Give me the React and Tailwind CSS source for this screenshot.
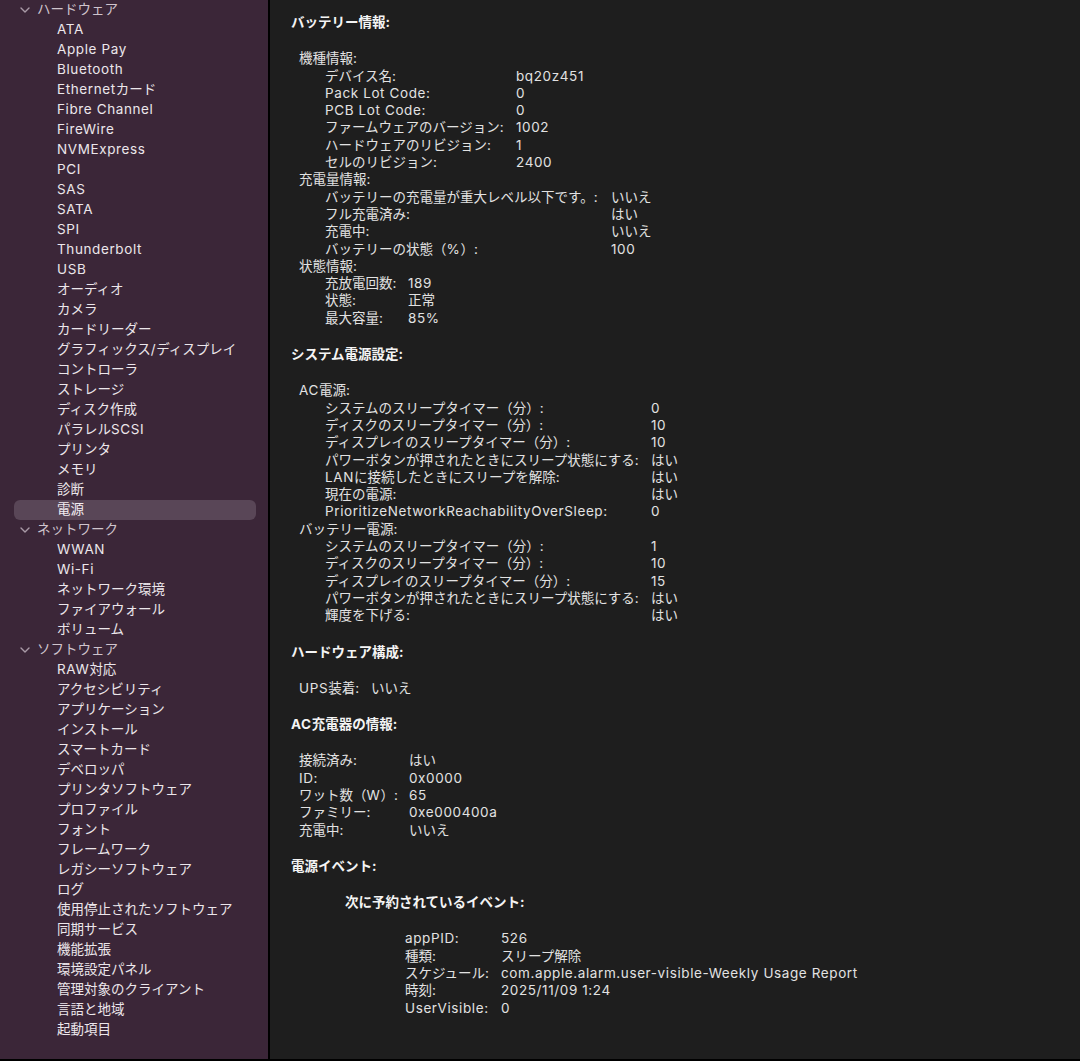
import React from 'react';

const sidebar = [
  { type: 'group', label: 'ハードウェア' },
  'ATA', 'Apple Pay', 'Bluetooth', 'Ethernetカード', 'Fibre Channel', 'FireWire', 'NVMExpress', 'PCI', 'SAS', 'SATA', 'SPI', 'Thunderbolt', 'USB',
  'オーディオ', 'カメラ', 'カードリーダー', 'グラフィックス/ディスプレイ', 'コントローラ', 'ストレージ', 'ディスク作成', 'パラレルSCSI', 'プリンタ', 'メモリ', '診断',
  { type: 'selected', label: '電源' },
  { type: 'group', label: 'ネットワーク' },
  'WWAN', 'Wi-Fi', 'ネットワーク環境', 'ファイアウォール', 'ボリューム',
  { type: 'group', label: 'ソフトウェア' },
  'RAW対応', 'アクセシビリティ', 'アプリケーション', 'インストール', 'スマートカード', 'デベロッパ', 'プリンタソフトウェア', 'プロファイル', 'フォント', 'フレームワーク',
  'レガシーソフトウェア', 'ログ', '使用停止されたソフトウェア', '同期サービス', '機能拡張', '環境設定パネル', '管理対象のクライアント', '言語と地域', '起動項目',
];

// latin runs get a little extra tracking so they read closer to the system font
function T({ s }) {
  return s.split(/([\x00-\x7f]+)/).map((part, i) =>
    /^[\x00-\x7f]+$/.test(part)
      ? <span key={i} className="tracking-[0.045em]">{part}</span>
      : part
  );
}

function Chevron() {
  return (
    <svg width="12" height="12" viewBox="0 0 12 12" className="shrink-0">
      <path d="M2 4 L6 8 L10 4" fill="none" stroke="#a99aa7" strokeWidth="1.4" strokeLinecap="round" strokeLinejoin="round" />
    </svg>
  );
}

function Sidebar() {
  return (
    <div className="w-[270px] shrink-0 bg-[#3b2638] border-r-2 border-black overflow-hidden">
      {sidebar.map((item, i) => {
        if (typeof item === 'string') {
          return (
            <div key={i} className="h-[20px] flex items-center pl-[57px] text-[#ece6eb] whitespace-nowrap">
              <T s={item} />
            </div>
          );
        }
        if (item.type === 'group') {
          return (
            <div key={i} className="h-[20px] flex items-center pl-[19px] gap-[6px] text-[#cfc4cd] whitespace-nowrap">
              <Chevron />
              <span>{item.label}</span>
            </div>
          );
        }
        return (
          <div key={i} className="h-[20px] ml-[14px] w-[242px] rounded-md bg-[#594657] flex items-center pl-[43px] text-[#f2edf1]">
            {item.label}
          </div>
        );
      })}
    </div>
  );
}

function Rows({ w, rows }) {
  return (
    <div>
      {rows.map(([k, v], i) => (
        <div key={i} className="flex whitespace-nowrap">
          <div style={{ width: w }} className="shrink-0"><T s={k} /></div>
          <div><T s={v} /></div>
        </div>
      ))}
    </div>
  );
}

function Heading({ children, className = '' }) {
  return <div className={`font-bold text-[#f4f4f4] ${className}`}><T s={children} /></div>;
}

function Label({ children }) {
  return <div><T s={children} /></div>;
}

export default function App() {
  return (
    <div
      className="flex h-[1061px] w-[1080px] border-b-2 border-black text-[13.5px] leading-[17.3px] overflow-hidden"
      style={{ fontFamily: 'Inter, "Noto Sans CJK JP", sans-serif' }}
    >
      <Sidebar />
      <div className="flex-1 bg-[#1e1e1e] text-[#e2e2e2] pl-[21px] pt-[14px]">
        <Heading>バッテリー情報:</Heading>
        <div className="mt-[19px] pl-[8px]">
          <Label>機種情報:</Label>
          <div className="pl-[26px]">
            <Rows w={191} rows={[
              ['デバイス名:', 'bq20z451'],
              ['Pack Lot Code:', '0'],
              ['PCB Lot Code:', '0'],
              ['ファームウェアのバージョン:', '1002'],
              ['ハードウェアのリビジョン:', '1'],
              ['セルのリビジョン:', '2400'],
            ]} />
          </div>
          <Label>充電量情報:</Label>
          <div className="pl-[26px]">
            <Rows w={286} rows={[
              ['バッテリーの充電量が重大レベル以下です。:', 'いいえ'],
              ['フル充電済み:', 'はい'],
              ['充電中:', 'いいえ'],
              ['バッテリーの状態（%）:', '100'],
            ]} />
          </div>
          <Label>状態情報:</Label>
          <div className="pl-[26px]">
            <Rows w={83} rows={[
              ['充放電回数:', '189'],
              ['状態:', '正常'],
              ['最大容量:', '85%'],
            ]} />
          </div>
        </div>

        <Heading className="mt-[19px]">システム電源設定:</Heading>
        <div className="mt-[19px] pl-[8px]">
          <Label>AC電源:</Label>
          <div className="pl-[26px]">
            <Rows w={326} rows={[
              ['システムのスリープタイマー（分）:', '0'],
              ['ディスクのスリープタイマー（分）:', '10'],
              ['ディスプレイのスリープタイマー（分）:', '10'],
              ['パワーボタンが押されたときにスリープ状態にする:', 'はい'],
              ['LANに接続したときにスリープを解除:', 'はい'],
              ['現在の電源:', 'はい'],
              ['PrioritizeNetworkReachabilityOverSleep:', '0'],
            ]} />
          </div>
          <Label>バッテリー電源:</Label>
          <div className="pl-[26px]">
            <Rows w={326} rows={[
              ['システムのスリープタイマー（分）:', '1'],
              ['ディスクのスリープタイマー（分）:', '10'],
              ['ディスプレイのスリープタイマー（分）:', '15'],
              ['パワーボタンが押されたときにスリープ状態にする:', 'はい'],
              ['輝度を下げる:', 'はい'],
            ]} />
          </div>
        </div>

        <Heading className="mt-[19px]">ハードウェア構成:</Heading>
        <div className="mt-[19px] pl-[8px]">
          <Rows w={72} rows={[['UPS装着:', 'いいえ']]} />
        </div>

        <Heading className="mt-[19px]">AC充電器の情報:</Heading>
        <div className="mt-[19px] pl-[8px]">
          <Rows w={110} rows={[
            ['接続済み:', 'はい'],
            ['ID:', '0x0000'],
            ['ワット数（W）:', '65'],
            ['ファミリー:', '0xe000400a'],
            ['充電中:', 'いいえ'],
          ]} />
        </div>

        <Heading className="mt-[19px]">電源イベント:</Heading>
        <div className="mt-[19px] pl-[54px]">
          <Heading>次に予約されているイベント:</Heading>
          <div className="mt-[19px] pl-[60px]">
            <Rows w={96} rows={[
              ['appPID:', '526'],
              ['種類:', 'スリープ解除'],
              ['スケジュール:', 'com.apple.alarm.user-visible-Weekly Usage Report'],
              ['時刻:', '2025/11/09 1:24'],
              ['UserVisible:', '0'],
            ]} />
          </div>
        </div>
      </div>
    </div>
  );
}
